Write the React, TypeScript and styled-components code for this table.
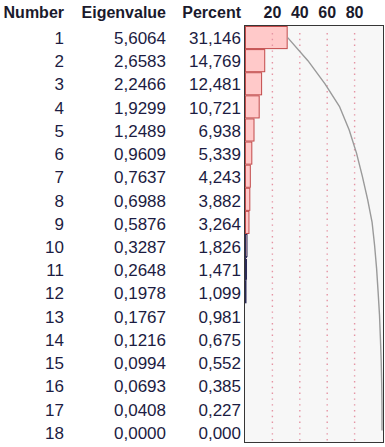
import styled, { createGlobalStyle } from "styled-components";

const ROWS: [number, string, string, number][] = [
  [1, "5,6064", "31,146", 31.146],
  [2, "2,6583", "14,769", 14.769],
  [3, "2,2466", "12,481", 12.481],
  [4, "1,9299", "10,721", 10.721],
  [5, "1,2489", "6,938", 6.938],
  [6, "0,9609", "5,339", 5.339],
  [7, "0,7637", "4,243", 4.243],
  [8, "0,6988", "3,882", 3.882],
  [9, "0,5876", "3,264", 3.264],
  [10, "0,3287", "1,826", 1.826],
  [11, "0,2648", "1,471", 1.471],
  [12, "0,1978", "1,099", 1.099],
  [13, "0,1767", "0,981", 0.981],
  [14, "0,1216", "0,675", 0.675],
  [15, "0,0994", "0,552", 0.552],
  [16, "0,0693", "0,385", 0.385],
  [17, "0,0408", "0,227", 0.227],
  [18, "0,0000", "0,000", 0],
];

const ROW_H = 23.22;
const CHART_W = 138;
const CHART_H = ROWS.length * ROW_H - 2;
const SCALE = 1.37;

const Global = createGlobalStyle`
  body {
    margin: 0;
    background: #ffffff;
  }
`;

const Table = styled.div`
  display: grid;
  grid-template-columns: 64px 102px 75px 3px 140px;
  grid-template-rows: 25px repeat(${ROWS.length}, ${ROW_H}px);
  font-family: "Liberation Sans", Arial, sans-serif;
  color: #1c1c42;
`;

const HeadCell = styled.div<{ $col: number }>`
  grid-row: 1;
  grid-column: ${(p) => p.$col};
  text-align: right;
  font-size: 16px;
  font-weight: bold;
  line-height: 18px;
  padding-top: 4px;
  color: #1a1a2c;
  white-space: nowrap;
`;

const Cell = styled.div<{ $col: number }>`
  grid-column: ${(p) => p.$col};
  text-align: right;
  font-size: 17px;
  line-height: 18px;
  padding-top: 5px;
  white-space: nowrap;
`;

const Axis = styled.div`
  grid-column: 5;
  grid-row: 1;
  display: flex;
  padding-left: 14.7px;
  font-size: 16px;
  font-weight: bold;
  line-height: 18px;
  padding-top: 4px;
  color: #1a1a2c;
`;

const Tick = styled.span`
  width: 27.4px;
  text-align: center;
`;

const ChartBox = styled.div`
  grid-column: 5;
  grid-row: 2 / span ${ROWS.length};
  box-sizing: border-box;
  width: 140px;
  border: 1px solid #363636;
  background: #f7f7f7;
  svg {
    display: block;
  }
`;

const Chart = () => {
  const rowH = CHART_H / ROWS.length;
  let cum = 0;
  const points = ROWS.map((r, i) => {
    cum += r[3];
    return `${Math.min(cum * SCALE, CHART_W - 0.5).toFixed(1)},${((i + 0.5) * rowH).toFixed(1)}`;
  }).join(" ");

  return (
    <svg width={CHART_W} height={CHART_H}>
      {ROWS.map((r, i) => {
        const w = r[3] * SCALE;
        if (w < 1.4) return null;
        const thin = w < 3;
        return (
          <rect
            key={i}
            x={0.5}
            y={i * rowH + 0.5}
            width={Math.max(w - 1, 0.5)}
            height={rowH - 1}
            fill="#ffc9c9"
            stroke={thin ? "#2a2a55" : "#c24a4a"}
            strokeWidth={1}
          />
        );
      })}
      {[20, 40, 60, 80].map((v) => (
        <line
          key={v}
          x1={v * SCALE}
          x2={v * SCALE}
          y1={7}
          y2={CHART_H}
          stroke="#e594a4"
          strokeWidth={1.4}
          strokeDasharray="1.4 4.4"
        />
      ))}
      <polyline
        points={points}
        fill="none"
        stroke="#9a9a9a"
        strokeWidth={1.4}
        strokeLinejoin="round"
      />
    </svg>
  );
};

export default function App() {
  return (
    <>
      <Global />
      <Table>
        <HeadCell $col={1}>Number</HeadCell>
        <HeadCell $col={2}>Eigenvalue</HeadCell>
        <HeadCell $col={3}>Percent</HeadCell>
        <Axis>
          {[20, 40, 60, 80].map((v) => (
            <Tick key={v}>{v}</Tick>
          ))}
        </Axis>
        {ROWS.map((r) => [
          <Cell key={`n${r[0]}`} $col={1}>{r[0]}</Cell>,
          <Cell key={`e${r[0]}`} $col={2}>{r[1]}</Cell>,
          <Cell key={`p${r[0]}`} $col={3}>{r[2]}</Cell>,
        ])}
        <ChartBox>
          <Chart />
        </ChartBox>
      </Table>
    </>
  );
}
